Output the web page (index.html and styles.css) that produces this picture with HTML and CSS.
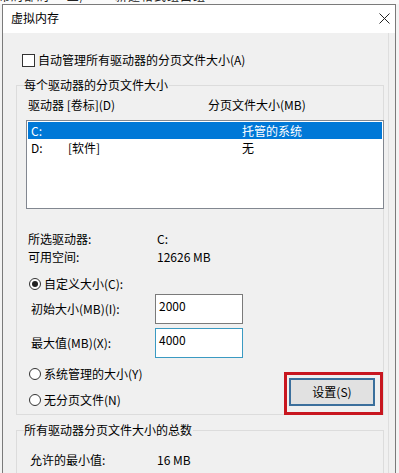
FILE: index.html
```html
<!DOCTYPE html>
<html lang="zh-CN">
<head>
<meta charset="utf-8">
<title>虚拟内存</title>
<link rel="stylesheet" href="styles.css">
</head>
<body>
<div class="screen">
  <div class="behind"><span class="behind-text">布局部局 　二/　　 新建格式组口组</span></div>
  <div class="window">
    <div class="titlebar">
      <span class="title">虚拟内存</span>
      <svg class="close" width="11" height="11" viewBox="0 0 11 11"><path d="M0.5 0.5 L10.5 10.5 M10.5 0.5 L0.5 10.5" stroke="#222" stroke-width="1" fill="none"/></svg>
    </div>
    <div class="content">
      <div class="check-row"><span class="checkbox"></span><span>自动管理所有驱动器的分页文件大小(A)</span></div>

      <div class="group group-drives">
        <div class="group-title">每个驱动器的分页文件大小</div>
        <div class="list-head"><span class="col-drive">驱动器 [卷标](D)</span><span>分页文件大小(MB)</span></div>
        <div class="listbox">
          <div class="list-row selected"><span>C:</span><span></span><span>托管的系统</span></div>
          <div class="list-row"><span>D:</span><span>[软件]</span><span>无</span></div>
        </div>

        <div class="info">
          <span>所选驱动器:</span><span>C:</span>
          <span>可用空间:</span><span>12626 MB</span>
        </div>

        <div class="radio-row first"><span class="radio checked"></span><span>自定义大小(C):</span></div>

        <div class="field-row"><span class="field-label">初始大小(MB)(I):</span><span class="textbox">2000</span></div>
        <div class="field-row second"><span class="field-label">最大值(MB)(X):</span><span class="textbox focused">4000</span></div>

        <div class="bottom-row">
          <div class="radios">
            <div class="radio-row sys"><span class="radio"></span><span>系统管理的大小(Y)</span></div>
            <div class="radio-row none"><span class="radio"></span><span>无分页文件(N)</span></div>
          </div>
          <div class="button-wrap">
            <span class="button">设置(S)</span>
            <span class="highlight"></span>
          </div>
        </div>
      </div>

      <div class="group group-total">
        <div class="group-title">所有驱动器分页文件大小的总数</div>
        <div class="total-row"><span>允许的最小值:</span><span>16 MB</span></div>
      </div>
    </div>
  </div>
</div>
</body>
</html>
```

FILE: styles.css
```css
* { box-sizing: border-box; }

html, body {
  margin: 0;
  padding: 0;
}

body {
  font-family: "Noto Sans CJK SC", "Microsoft YaHei", sans-serif;
  font-size: 12px;
  line-height: 16px;
  color: #000;
  background: #f3f3f3;
}

.screen {
  width: 399px;
  height: 473px;
  overflow: hidden;
  background: #f3f3f3;
}

.behind {
  height: 4px;
  overflow: hidden;
  background: #fafafa;
}

.behind-text {
  display: block;
  margin-top: -11px;
  margin-left: -2px;
  font-size: 12px;
  line-height: 14px;
  color: #222;
  white-space: nowrap;
  letter-spacing: 1px;
}

.window {
  margin-left: 2px;
  width: 394px;
  height: 469px;
  border: 1px solid #7a7a7a;
  border-bottom: none;
  background: #f0f0f0;
}

.titlebar {
  height: 28px;
  background: #fff;
  display: flex;
  align-items: center;
  justify-content: space-between;
  padding: 0 5px 2px 8px;
}

.title {
  font-size: 12px;
}

.close {
  display: block;
}

.content {
  margin-right: 6px;
  height: 440px;
  border-right: 1px solid #dedede;
  padding: 19px 4px 0 13px;
}

.check-row {
  display: flex;
  align-items: center;
  height: 16px;
  padding-left: 6px;
}

.checkbox {
  width: 13px;
  height: 13px;
  border: 1px solid #333;
  background: #fff;
  margin-right: 3px;
}

.group {
  border: 1px solid #dcdcdc;
  padding: 0 0 6px 9px;
}

.group-drives {
  margin-top: 17px;
}

.group-title {
  width: fit-content;
  margin: -9px 0 0 -2px;
  padding: 0 1px 0 0;
  background: #f0f0f0;
  line-height: 16px;
}

.list-head {
  display: flex;
  margin-top: 4px;
  padding-left: 2px;
}

.col-drive {
  width: 180px;
}

.listbox {
  margin-top: 7px;
  margin-right: -1px;
  height: 89px;
  border: 1px solid #828790;
  background: #fff;
  padding: 1px;
}

.list-row {
  display: grid;
  grid-template-columns: 37px 174px 1fr;
  height: 17px;
  line-height: 17px;
  padding-left: 3px;
}

.list-row.selected {
  background: #0078d7;
  color: #fff;
}

.info {
  display: grid;
  grid-template-columns: 129px 1fr;
  line-height: 18px;
  margin-top: 21px;
  padding-left: 2px;
}

.radio-row {
  display: flex;
  align-items: center;
  height: 16px;
  padding-left: 3px;
}

.radio-row.first { margin-top: 10px; }
.radio-row.sys { margin-top: 8px; }
.radio-row.none { margin-top: 10px; }

.radio {
  width: 12px;
  height: 12px;
  border: 1px solid #333;
  border-radius: 50%;
  background: #fff;
  margin-right: 3px;
  display: flex;
  align-items: center;
  justify-content: center;
}

.radio.checked::after {
  content: "";
  width: 6px;
  height: 6px;
  border-radius: 50%;
  background: #222;
}

.field-row {
  display: grid;
  grid-template-columns: 124px 88px;
  align-items: center;
  margin-top: 2px;
  padding-left: 5px;
}

.field-row.second { margin-top: 4px; }

.textbox {
  height: 30px;
  border: 1px solid #7a7a7a;
  background: #fff;
  padding: 3px 3px;
  line-height: 16px;
}

.textbox.focused {
  border-color: #3a9ac2;
}

.bottom-row {
  display: flex;
  justify-content: space-between;
  align-items: flex-start;
}

.button-wrap {
  position: relative;
  margin-top: 20px;
  margin-right: 8px;
}

.button {
  display: flex;
  align-items: center;
  justify-content: center;
  width: 86px;
  height: 28px;
  border: 2px solid #3b6f9c;
  background: #e1e1e1;
}

.highlight {
  position: absolute;
  left: -5px;
  right: -8px;
  top: -6px;
  bottom: -9px;
  border: 3px solid #c8161f;
}

.group-total {
  margin-top: 15px;
  height: 60px;
}

.total-row {
  display: grid;
  grid-template-columns: 127px 1fr;
  margin-top: 14px;
  padding-left: 4px;
}
```
